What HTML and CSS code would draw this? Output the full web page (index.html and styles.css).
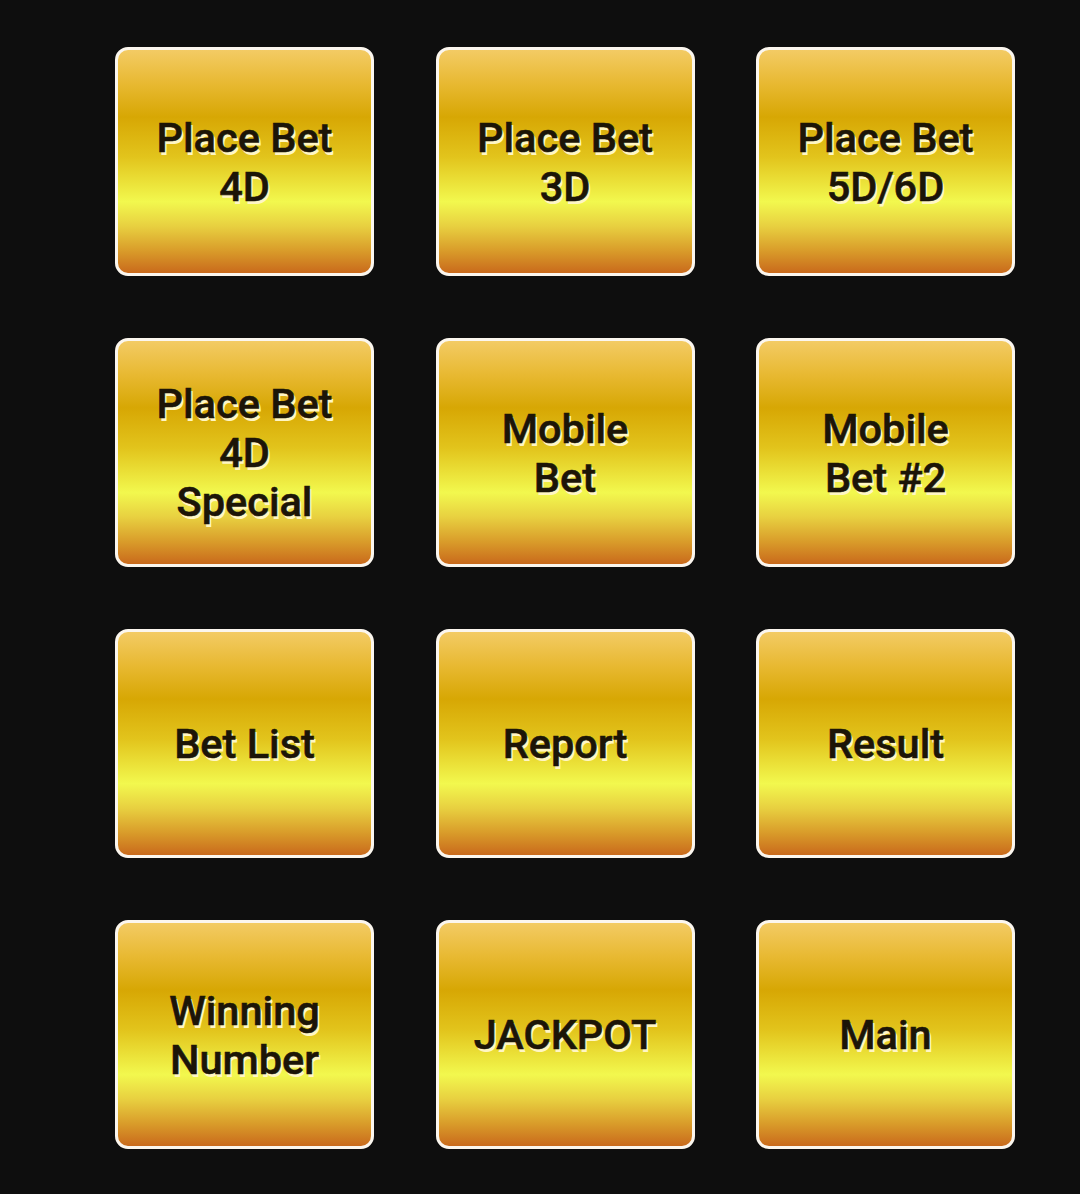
FILE: index.html
```html
<!DOCTYPE html>
<html>
<head>
<meta charset="utf-8">
<link rel="stylesheet" href="styles.css">
</head>
<body>
<div class="grid">
  <div class="btn"><span>Place Bet<br>4D</span></div>
  <div class="btn"><span>Place Bet<br>3D</span></div>
  <div class="btn"><span>Place Bet<br>5D/6D</span></div>
  <div class="btn"><span>Place Bet<br>4D<br>Special</span></div>
  <div class="btn"><span>Mobile<br>Bet</span></div>
  <div class="btn"><span>Mobile<br>Bet #2</span></div>
  <div class="btn"><span>Bet List</span></div>
  <div class="btn"><span>Report</span></div>
  <div class="btn"><span>Result</span></div>
  <div class="btn"><span>Winning<br>Number</span></div>
  <div class="btn"><span>JACKPOT</span></div>
  <div class="btn"><span>Main</span></div>
</div>
</body>
</html>
```
FILE: styles.css
```css
html, body {
  margin: 0;
  padding: 0;
  background: #0e0e0e;
}
body {
  width: 1080px;
  height: 1194px;
  overflow: hidden;
  font-family: Roboto, "Liberation Sans", sans-serif;
}
.grid {
  display: grid;
  grid-template-columns: repeat(3, 259px);
  grid-auto-rows: 229px;
  column-gap: 61.5px;
  row-gap: 62px;
  padding: 47px 0 0 115px;
}
.btn {
  box-sizing: border-box;
  border: 3px solid #fbf6ee;
  border-radius: 13px;
  background: linear-gradient(to bottom,
    #f3cb64 0%,
    #e8b932 15%,
    #d7a704 30%,
    #e2c41c 48%,
    #f2f84e 68%,
    #e8d040 79%,
    #d99c2a 90%,
    #c96a1c 100%);
  display: flex;
  align-items: center;
  justify-content: center;
  text-align: center;
}
.btn span {
  font-size: 41.5px;
  font-weight: 500;
  line-height: 49px;
  color: #1c1507;
  text-shadow: 2px 3px 0 #fff6c4;
  -webkit-text-stroke: 0.6px #1c1507;
}
```
